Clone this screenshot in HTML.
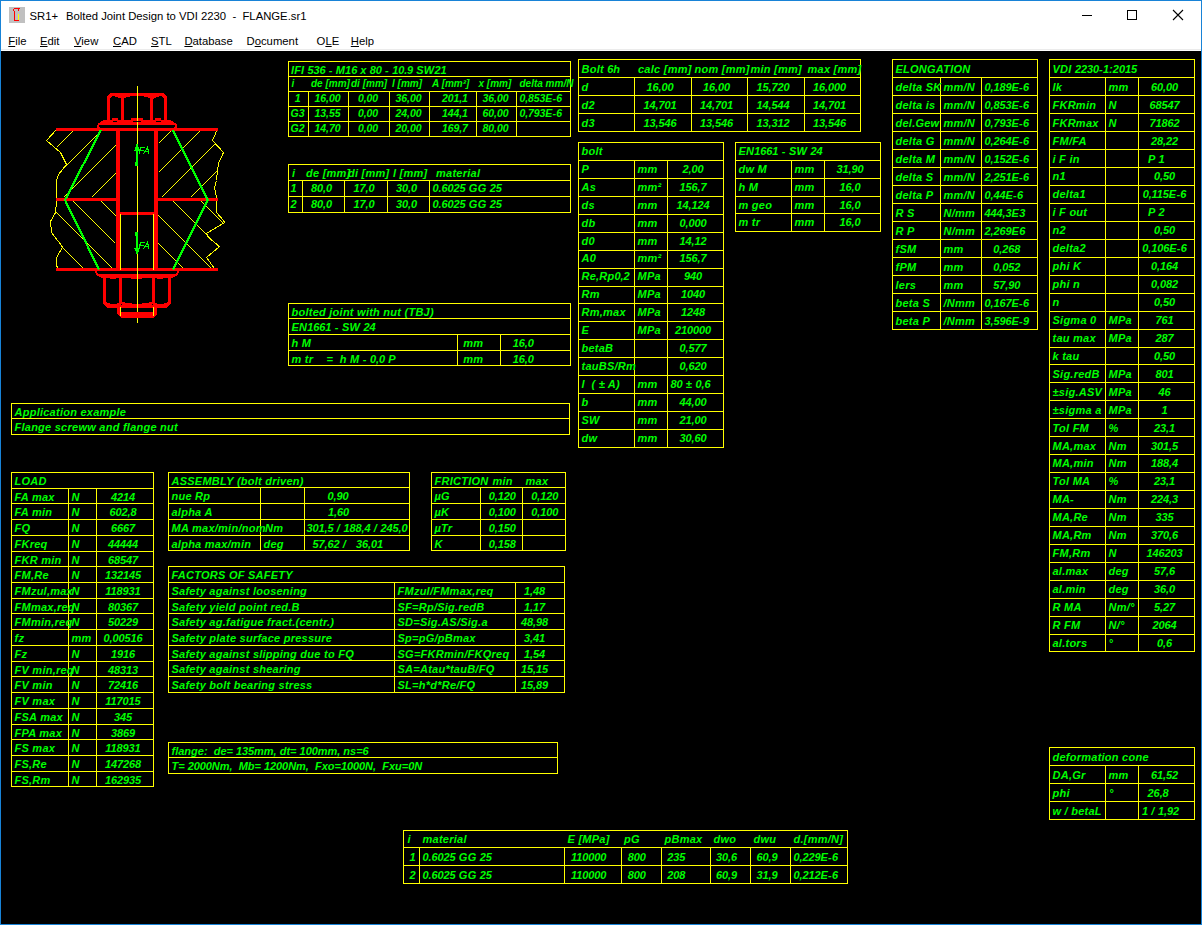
<!DOCTYPE html>
<html><head><meta charset="utf-8"><style>
html,body{margin:0;padding:0;width:1202px;height:925px;overflow:hidden;background:#fff}
#win{position:absolute;left:0;top:0;width:1200px;height:923px;border:1px solid #1883d7;background:#fff}
.t{position:absolute;font-family:"Liberation Sans",sans-serif;font-size:11.3px;line-height:13px;color:#000;white-space:pre}
.mi{position:absolute;top:35px;font-family:"Liberation Sans",sans-serif;font-size:11.3px;line-height:13px;color:#000;white-space:pre}
.mi u{text-decoration:underline;text-underline-offset:1px}
#canvas{position:absolute;left:1px;top:51px;width:1200px;height:873px;background:#000}
svg{position:absolute;left:0;top:0}
text{font-family:"Liberation Sans",sans-serif;font-weight:bold;font-style:italic;font-size:11px;fill:#00ff00;letter-spacing:0.25px;white-space:pre}
tspan.d{letter-spacing:-0.1px}
</style></head><body>
<div id="win"></div>
<div style="position:absolute;left:9px;top:7px;width:16px;height:16px;background:#c0c0c0"></div>
<svg width="30" height="30" style="position:absolute;left:0;top:0" shape-rendering="crispEdges"><g fill="#f00"><rect x="14" y="8" width="6" height="1"/><rect x="13" y="9" width="1" height="2"/><rect x="18" y="9" width="1" height="2"/><rect x="14" y="11" width="1" height="10"/><rect x="14" y="20" width="5" height="1"/></g><rect x="18" y="14" width="1" height="6" fill="#ff0"/></svg>
<div class="t" style="left:29.5px;top:10px">SR1+</div><div class="t" style="left:66px;top:10px">Bolted Joint Design to VDI 2230  -  FLANGE.sr1</div>
<svg width="1202" height="51" style="position:absolute;left:0;top:0" shape-rendering="crispEdges">
<rect x="1082" y="15" width="10" height="1" fill="#000"/>
<rect x="1127.5" y="10.5" width="9" height="9" fill="none" stroke="#000" stroke-width="1"/>
</svg>
<svg width="1202" height="51" style="position:absolute;left:0;top:0"><path d="M1173,10 L1183,20 M1183,10 L1173,20" stroke="#000" stroke-width="1.1"/></svg>
<span class="mi" style="left:8.3px"><u>F</u>ile</span><span class="mi" style="left:40px"><u>E</u>dit</span><span class="mi" style="left:74px"><u>V</u>iew</span><span class="mi" style="left:113px"><u>C</u>AD</span><span class="mi" style="left:151px"><u>S</u>TL</span><span class="mi" style="left:184.4px"><u>D</u>atabase</span><span class="mi" style="left:246.5px">D<u>o</u>cument</span><span class="mi" style="left:316.6px">O<u>L</u>E</span><span class="mi" style="left:350.8px"><u>H</u>elp</span>
<div style="position:absolute;left:1px;top:49px;width:1200px;height:1px;background:#ebebeb"></div>
<div id="canvas"></div>
<svg width="1202" height="925" style="position:absolute;left:0;top:0">
<g fill="#ffff00" shape-rendering="crispEdges"><rect x="288" y="61" width="283" height="1"/><rect x="288" y="136" width="283" height="1"/><rect x="288" y="61" width="1" height="76"/><rect x="570" y="61" width="1" height="76"/><rect x="288" y="76" width="283" height="1"/><rect x="288" y="91" width="283" height="1"/><rect x="288" y="106" width="283" height="1"/><rect x="288" y="121" width="283" height="1"/><rect x="308" y="91" width="1" height="46"/><rect x="348" y="91" width="1" height="46"/><rect x="389" y="91" width="1" height="46"/><rect x="429" y="91" width="1" height="46"/><rect x="476" y="91" width="1" height="46"/><rect x="516" y="91" width="1" height="46"/><rect x="578" y="59" width="283" height="1"/><rect x="578" y="131" width="283" height="1"/><rect x="578" y="59" width="1" height="73"/><rect x="860" y="59" width="1" height="73"/><rect x="578" y="77" width="283" height="1"/><rect x="578" y="95" width="283" height="1"/><rect x="578" y="113" width="283" height="1"/><rect x="634" y="77" width="1" height="55"/><rect x="691" y="77" width="1" height="55"/><rect x="747" y="77" width="1" height="55"/><rect x="804" y="77" width="1" height="55"/><rect x="892" y="59" width="146" height="1"/><rect x="892" y="329" width="146" height="1"/><rect x="892" y="59" width="1" height="271"/><rect x="1037" y="59" width="1" height="271"/><rect x="892" y="77" width="146" height="1"/><rect x="892" y="95" width="146" height="1"/><rect x="892" y="113" width="146" height="1"/><rect x="892" y="131" width="146" height="1"/><rect x="892" y="149" width="146" height="1"/><rect x="892" y="167" width="146" height="1"/><rect x="892" y="185" width="146" height="1"/><rect x="892" y="203" width="146" height="1"/><rect x="892" y="221" width="146" height="1"/><rect x="892" y="239" width="146" height="1"/><rect x="892" y="257" width="146" height="1"/><rect x="892" y="275" width="146" height="1"/><rect x="892" y="293" width="146" height="1"/><rect x="892" y="311" width="146" height="1"/><rect x="940" y="77" width="1" height="253"/><rect x="981" y="77" width="1" height="253"/><rect x="1049" y="59" width="146" height="1"/><rect x="1049" y="651" width="146" height="1"/><rect x="1049" y="59" width="1" height="593"/><rect x="1194" y="59" width="1" height="593"/><rect x="1049" y="77" width="146" height="1"/><rect x="1049" y="95" width="146" height="1"/><rect x="1049" y="113" width="146" height="1"/><rect x="1049" y="131" width="146" height="1"/><rect x="1049" y="149" width="146" height="1"/><rect x="1049" y="167" width="146" height="1"/><rect x="1049" y="185" width="146" height="1"/><rect x="1049" y="203" width="146" height="1"/><rect x="1049" y="221" width="146" height="1"/><rect x="1049" y="239" width="146" height="1"/><rect x="1049" y="257" width="146" height="1"/><rect x="1049" y="275" width="146" height="1"/><rect x="1049" y="293" width="146" height="1"/><rect x="1049" y="311" width="146" height="1"/><rect x="1049" y="329" width="146" height="1"/><rect x="1049" y="347" width="146" height="1"/><rect x="1049" y="364" width="146" height="1"/><rect x="1049" y="382" width="146" height="1"/><rect x="1049" y="400" width="146" height="1"/><rect x="1049" y="418" width="146" height="1"/><rect x="1049" y="436" width="146" height="1"/><rect x="1049" y="454" width="146" height="1"/><rect x="1049" y="472" width="146" height="1"/><rect x="1049" y="490" width="146" height="1"/><rect x="1049" y="508" width="146" height="1"/><rect x="1049" y="526" width="146" height="1"/><rect x="1049" y="544" width="146" height="1"/><rect x="1049" y="562" width="146" height="1"/><rect x="1049" y="580" width="146" height="1"/><rect x="1049" y="598" width="146" height="1"/><rect x="1049" y="616" width="146" height="1"/><rect x="1049" y="634" width="146" height="1"/><rect x="1105" y="77" width="1" height="575"/><rect x="1138" y="77" width="1" height="575"/><rect x="288" y="164" width="283" height="1"/><rect x="288" y="212" width="283" height="1"/><rect x="288" y="164" width="1" height="49"/><rect x="570" y="164" width="1" height="49"/><rect x="288" y="180" width="283" height="1"/><rect x="288" y="196" width="283" height="1"/><rect x="302" y="180" width="1" height="33"/><rect x="344" y="180" width="1" height="33"/><rect x="387" y="180" width="1" height="33"/><rect x="429" y="180" width="1" height="33"/><rect x="578" y="142" width="146" height="1"/><rect x="578" y="447" width="146" height="1"/><rect x="578" y="142" width="1" height="306"/><rect x="723" y="142" width="1" height="306"/><rect x="578" y="160" width="146" height="1"/><rect x="578" y="178" width="146" height="1"/><rect x="578" y="196" width="146" height="1"/><rect x="578" y="214" width="146" height="1"/><rect x="578" y="232" width="146" height="1"/><rect x="578" y="250" width="146" height="1"/><rect x="578" y="268" width="146" height="1"/><rect x="578" y="286" width="146" height="1"/><rect x="578" y="303" width="146" height="1"/><rect x="578" y="321" width="146" height="1"/><rect x="578" y="339" width="146" height="1"/><rect x="578" y="357" width="146" height="1"/><rect x="578" y="375" width="146" height="1"/><rect x="578" y="393" width="146" height="1"/><rect x="578" y="411" width="146" height="1"/><rect x="578" y="429" width="146" height="1"/><rect x="634" y="160" width="1" height="288"/><rect x="667" y="160" width="1" height="288"/><rect x="735" y="142" width="146" height="1"/><rect x="735" y="231" width="146" height="1"/><rect x="735" y="142" width="1" height="90"/><rect x="880" y="142" width="1" height="90"/><rect x="735" y="160" width="146" height="1"/><rect x="735" y="178" width="146" height="1"/><rect x="735" y="196" width="146" height="1"/><rect x="735" y="213" width="146" height="1"/><rect x="791" y="160" width="1" height="72"/><rect x="824" y="160" width="1" height="72"/><rect x="288" y="303" width="283" height="1"/><rect x="288" y="365" width="283" height="1"/><rect x="288" y="303" width="1" height="63"/><rect x="570" y="303" width="1" height="63"/><rect x="288" y="318" width="283" height="1"/><rect x="288" y="334" width="283" height="1"/><rect x="288" y="350" width="283" height="1"/><rect x="457" y="334" width="1" height="32"/><rect x="500" y="334" width="1" height="32"/><rect x="11" y="403" width="559" height="1"/><rect x="11" y="434" width="559" height="1"/><rect x="11" y="403" width="1" height="32"/><rect x="569" y="403" width="1" height="32"/><rect x="11" y="418" width="559" height="1"/><rect x="11" y="472" width="143" height="1"/><rect x="11" y="786" width="143" height="1"/><rect x="11" y="472" width="1" height="315"/><rect x="153" y="472" width="1" height="315"/><rect x="11" y="488" width="143" height="1"/><rect x="11" y="503" width="143" height="1"/><rect x="11" y="519" width="143" height="1"/><rect x="11" y="535" width="143" height="1"/><rect x="11" y="551" width="143" height="1"/><rect x="11" y="566" width="143" height="1"/><rect x="11" y="582" width="143" height="1"/><rect x="11" y="598" width="143" height="1"/><rect x="11" y="613" width="143" height="1"/><rect x="11" y="629" width="143" height="1"/><rect x="11" y="645" width="143" height="1"/><rect x="11" y="661" width="143" height="1"/><rect x="11" y="676" width="143" height="1"/><rect x="11" y="692" width="143" height="1"/><rect x="11" y="708" width="143" height="1"/><rect x="11" y="724" width="143" height="1"/><rect x="11" y="739" width="143" height="1"/><rect x="11" y="755" width="143" height="1"/><rect x="11" y="771" width="143" height="1"/><rect x="68" y="488" width="1" height="299"/><rect x="96" y="488" width="1" height="299"/><rect x="168" y="472" width="242" height="1"/><rect x="168" y="550" width="242" height="1"/><rect x="168" y="472" width="1" height="79"/><rect x="409" y="472" width="1" height="79"/><rect x="168" y="487" width="242" height="1"/><rect x="168" y="503" width="242" height="1"/><rect x="168" y="519" width="242" height="1"/><rect x="168" y="535" width="242" height="1"/><rect x="260" y="487" width="1" height="64"/><rect x="304" y="487" width="1" height="64"/><rect x="431" y="472" width="135" height="1"/><rect x="431" y="550" width="135" height="1"/><rect x="431" y="472" width="1" height="79"/><rect x="565" y="472" width="1" height="79"/><rect x="431" y="487" width="135" height="1"/><rect x="431" y="503" width="135" height="1"/><rect x="431" y="519" width="135" height="1"/><rect x="431" y="535" width="135" height="1"/><rect x="480" y="487" width="1" height="64"/><rect x="522" y="487" width="1" height="64"/><rect x="168" y="566" width="397" height="1"/><rect x="168" y="692" width="397" height="1"/><rect x="168" y="566" width="1" height="127"/><rect x="564" y="566" width="1" height="127"/><rect x="168" y="582" width="397" height="1"/><rect x="168" y="598" width="397" height="1"/><rect x="168" y="613" width="397" height="1"/><rect x="168" y="629" width="397" height="1"/><rect x="168" y="645" width="397" height="1"/><rect x="168" y="660" width="397" height="1"/><rect x="168" y="676" width="397" height="1"/><rect x="394" y="582" width="1" height="111"/><rect x="515" y="582" width="1" height="111"/><rect x="168" y="742" width="390" height="1"/><rect x="168" y="773" width="390" height="1"/><rect x="168" y="742" width="1" height="32"/><rect x="557" y="742" width="1" height="32"/><rect x="168" y="757" width="390" height="1"/><rect x="1049" y="747" width="146" height="1"/><rect x="1049" y="819" width="146" height="1"/><rect x="1049" y="747" width="1" height="73"/><rect x="1194" y="747" width="1" height="73"/><rect x="1049" y="765" width="146" height="1"/><rect x="1049" y="783" width="146" height="1"/><rect x="1049" y="801" width="146" height="1"/><rect x="1105" y="765" width="1" height="55"/><rect x="1138" y="765" width="1" height="55"/><rect x="403" y="830" width="445" height="1"/><rect x="403" y="883" width="445" height="1"/><rect x="403" y="830" width="1" height="54"/><rect x="847" y="830" width="1" height="54"/><rect x="403" y="847" width="445" height="1"/><rect x="403" y="865" width="445" height="1"/><rect x="419" y="847" width="1" height="37"/><rect x="564" y="847" width="1" height="37"/><rect x="621" y="847" width="1" height="37"/><rect x="661" y="847" width="1" height="37"/><rect x="710" y="847" width="1" height="37"/><rect x="750" y="847" width="1" height="37"/><rect x="790" y="847" width="1" height="37"/></g>
<g shape-rendering="crispEdges"><g stroke="#ffff00" stroke-width="1" fill="none">
<polyline points="56.5,129.5 46.5,140.5 53.5,146.5 60.5,152.5 66.5,164.5 58.5,174.5 56.5,180.5 56.5,195.5 57.5,199.5 56.5,202.5 55.5,212.5 50.5,221.5 51.5,232.5 54.5,236.5 61.5,245.5 62.5,247.5 56.5,257.5 56.5,264.5 57.5,268.5"/>
<polyline points="216.5,130.5 215.5,133.5 212.5,140.5 223.5,152.5 218.5,163.5 217.5,170.5 216.5,180.5 214.5,187.5 216.5,197.5 216.5,206.5 216.5,212.5 223.5,220.5 224.5,222.5 206.5,233.5 208.5,237.5 219.5,246.5 206.5,257.5 214.5,268.5"/>
<line x1="56.5" y1="147.5" x2="73.5" y2="130.5"/>
<line x1="61.5" y1="170.5" x2="100.5" y2="131.5"/>
<line x1="63.5" y1="197.5" x2="115.5" y2="145.5"/>
<line x1="91.5" y1="197.5" x2="115.5" y2="173.5"/>
<line x1="158.5" y1="143.5" x2="171.5" y2="130.5"/>
<line x1="158.5" y1="172.5" x2="200.5" y2="130.5"/>
<line x1="161.5" y1="197.5" x2="214.5" y2="144.5"/>
<line x1="190.5" y1="197.5" x2="216.5" y2="171.5"/>
<line x1="100.5" y1="200.5" x2="116.5" y2="216.5"/>
<line x1="72.5" y1="200.5" x2="115.5" y2="243.5"/>
<line x1="56.5" y1="212.5" x2="112.5" y2="268.5"/>
<line x1="62.5" y1="247.5" x2="83.5" y2="268.5"/>
<line x1="201.5" y1="201.5" x2="223.5" y2="223.5"/>
<line x1="173.5" y1="201.5" x2="219.5" y2="247.5"/>
<line x1="158.5" y1="215.5" x2="211.5" y2="268.5"/>
<line x1="158.5" y1="243.5" x2="183.5" y2="268.5"/>
</g>
<g stroke="#ff0000" fill="none" stroke-linejoin="round">
<path stroke-width="3" d="M108.5,120 V97.5 L111.5,94.5 H162.5 L165.5,97.5 V120"/>
<path stroke-width="3" d="M122.5,97.5 V119.5 M151.5,97.5 V119.5"/>
<path stroke-width="3" d="M56,129.5 H218 M56,199.5 H118 M156,199.5 H218 M56,269.5 H218"/>
<path stroke-width="4" d="M118,131 V268 M156,131 V268"/>
<path stroke-width="3" d="M120,213.5 H154"/>
<path stroke-width="2" d="M97.8,124.5 Q97.8,128 100.5,129 M176.2,124.5 Q176.2,128 173.5,129"/>
<path stroke-width="2" d="M95.8,270.5 Q96.5,275.5 102,277 M178.2,270.5 Q177.5,275.5 172,277"/>
<path stroke-width="3" d="M104.5,278 V303 M169.5,278 V303 M120.5,278 V302 M153.5,278 V302"/>
</g>
<g fill="#ff0000">
<polygon points="103.5,120 170.5,120 176.5,124 176.5,125 97.5,125 97.5,124"/>
<polygon points="113,96 123,96 123,99.5 118,97.5"/><polygon points="161,96 151,96 151,99.5 156,97.5"/>
<polygon points="122,96 132,96 127,97.2 122,99.5"/><polygon points="152,96 142,96 147,97.2 152,99.5"/>
<rect x="112" y="118" width="6" height="2"/><rect x="131" y="118" width="12" height="2"/><rect x="155" y="118" width="6" height="2"/>
<polygon points="99,273.5 175,273.5 173,278 101,278"/>
<rect x="110" y="277" width="6" height="2"/><rect x="131" y="277" width="11" height="2"/><rect x="156.5" y="277" width="6" height="2"/>
<polygon points="103,302 106,302 111,304 117,303.5 121,301.5 127,303 137,304 147,303 153,301.5 157,303.5 163,304 168,302 171,302 171,304 166,308 108,308 103,304"/>
<polygon points="117,307 121,307 121,312 153,312 153,307 157,307 157,314 153.5,317.5 120.5,317.5 117,314"/>
</g>
<g stroke="#ffff00" stroke-width="1" fill="none"><line x1="137.5" y1="86" x2="137.5" y2="323"/><line x1="120.5" y1="214" x2="120.5" y2="270"/><line x1="153.5" y1="214" x2="153.5" y2="270"/><line x1="120.5" y1="306.5" x2="120.5" y2="316"/><line x1="153.5" y1="306.5" x2="153.5" y2="316"/></g>
<g fill="#ff0000"><rect x="121" y="312" width="32" height="6"/></g><g fill="#000"><rect x="121" y="304" width="1" height="1"/><rect x="151.5" y="304" width="1.5" height="1"/></g>
<g fill="#000"><ellipse cx="115" cy="121.3" rx="2.5" ry="0.7"/><ellipse cx="137" cy="121.3" rx="4.5" ry="0.7"/><ellipse cx="158.5" cy="121.3" rx="2.5" ry="0.7"/></g>
<g stroke="#00ff00" stroke-width="2.2" fill="none"><polyline points="101,130 65,200 99,269.5"/><polyline points="172.7,130 207.8,200 173.2,269.5"/></g>
<g fill="#00ff00"><polygon points="137,143 140,151 138,151 138,166 135,166 135,162 136,162 136,151 134,151"/>
<polygon points="137,255.5 140,247.5 138,247.5 138,232 135,232 135,236 136,236 136,247.5 134,247.5"/></g>
<g stroke="#00ff00" stroke-width="1.1" fill="none"><path d="M140.5,147.5 L139,154 M140.5,147.5 H144.5 M140,150.5 H143.5 M143.5,154 L147.5,147.5 L149,154 M145,151.5 H148.5"/><path transform="translate(0,95)" d="M140.5,147.5 L139,154 M140.5,147.5 H144.5 M140,150.5 H143.5 M143.5,154 L147.5,147.5 L149,154 M145,151.5 H148.5"/></g></g>
<g><text x="291" y="73.5" style="font-size:11px;letter-spacing:0.15px">IFI <tspan class="d">536</tspan> - M<tspan class="d">16</tspan> x <tspan class="d">80</tspan> - <tspan class="d">10.9</tspan> SW<tspan class="d">21</tspan></text>
<text x="291.5" y="86.8" style="font-size:10px;letter-spacing:0px">i</text>
<text x="311" y="86.8" style="font-size:10px;letter-spacing:0px">de [mm]</text>
<text x="351" y="86.8" style="font-size:10px;letter-spacing:0px">di [mm]</text>
<text x="392" y="86.8" style="font-size:10px;letter-spacing:0px">l [mm]</text>
<text x="432" y="86.8" style="font-size:10px;letter-spacing:0px">A [mm²]</text>
<text x="478.5" y="86.8" style="font-size:10px;letter-spacing:0px">x [mm]</text>
<text x="519.5" y="86.8" style="font-size:10px;letter-spacing:0px">delta mm/N</text>
<text x="297.5" y="102.2" text-anchor="middle" style="font-size:10.5px;letter-spacing:0.238636px"><tspan class="d">1</tspan></text>
<text x="327.5" y="102.2" text-anchor="middle" style="font-size:10.5px;letter-spacing:0.238636px"><tspan class="d">16,00</tspan></text>
<text x="368" y="102.2" text-anchor="middle" style="font-size:10.5px;letter-spacing:0.238636px"><tspan class="d">0,00</tspan></text>
<text x="408.5" y="102.2" text-anchor="middle" style="font-size:10.5px;letter-spacing:0.238636px"><tspan class="d">36,00</tspan></text>
<text x="442" y="102.2" style="font-size:10.5px;letter-spacing:0.238636px"><tspan class="d">201,1</tspan></text>
<text x="495.5" y="102.2" text-anchor="middle" style="font-size:10.5px;letter-spacing:0.238636px"><tspan class="d">36,00</tspan></text>
<text x="519.5" y="102.2" style="font-size:10.5px;letter-spacing:0.238636px"><tspan class="d">0,853</tspan>E-<tspan class="d">6</tspan></text>
<text x="297.5" y="117.2" text-anchor="middle" style="font-size:10.5px;letter-spacing:0.238636px">G<tspan class="d">3</tspan></text>
<text x="327.5" y="117.2" text-anchor="middle" style="font-size:10.5px;letter-spacing:0.238636px"><tspan class="d">13,55</tspan></text>
<text x="368" y="117.2" text-anchor="middle" style="font-size:10.5px;letter-spacing:0.238636px"><tspan class="d">0,00</tspan></text>
<text x="408.5" y="117.2" text-anchor="middle" style="font-size:10.5px;letter-spacing:0.238636px"><tspan class="d">24,00</tspan></text>
<text x="442" y="117.2" style="font-size:10.5px;letter-spacing:0.238636px"><tspan class="d">144,1</tspan></text>
<text x="495.5" y="117.2" text-anchor="middle" style="font-size:10.5px;letter-spacing:0.238636px"><tspan class="d">60,00</tspan></text>
<text x="519.5" y="117.2" style="font-size:10.5px;letter-spacing:0.238636px"><tspan class="d">0,793</tspan>E-<tspan class="d">6</tspan></text>
<text x="297.5" y="132.2" text-anchor="middle" style="font-size:10.5px;letter-spacing:0.238636px">G<tspan class="d">2</tspan></text>
<text x="327.5" y="132.2" text-anchor="middle" style="font-size:10.5px;letter-spacing:0.238636px"><tspan class="d">14,70</tspan></text>
<text x="368" y="132.2" text-anchor="middle" style="font-size:10.5px;letter-spacing:0.238636px"><tspan class="d">0,00</tspan></text>
<text x="408.5" y="132.2" text-anchor="middle" style="font-size:10.5px;letter-spacing:0.238636px"><tspan class="d">20,00</tspan></text>
<text x="442" y="132.2" style="font-size:10.5px;letter-spacing:0.238636px"><tspan class="d">169,7</tspan></text>
<text x="495.5" y="132.2" text-anchor="middle" style="font-size:10.5px;letter-spacing:0.238636px"><tspan class="d">80,00</tspan></text>
<text x="581.5" y="72.8">Bolt <tspan class="d">6</tspan>h</text>
<text x="638" y="72.8">calc [mm]</text>
<text x="694.5" y="72.8">nom [mm]</text>
<text x="750.5" y="72.8">min [mm]</text>
<text x="807.5" y="72.8">max [mm]</text>
<text x="581.5" y="90.8">d</text>
<text x="660" y="90.8" text-anchor="middle"><tspan class="d">16,00</tspan></text>
<text x="716.5" y="90.8" text-anchor="middle"><tspan class="d">16,00</tspan></text>
<text x="773" y="90.8" text-anchor="middle"><tspan class="d">15,720</tspan></text>
<text x="829.5" y="90.8" text-anchor="middle"><tspan class="d">16,000</tspan></text>
<text x="581.5" y="108.8">d<tspan class="d">2</tspan></text>
<text x="660" y="108.8" text-anchor="middle"><tspan class="d">14,701</tspan></text>
<text x="716.5" y="108.8" text-anchor="middle"><tspan class="d">14,701</tspan></text>
<text x="773" y="108.8" text-anchor="middle"><tspan class="d">14,544</tspan></text>
<text x="829.5" y="108.8" text-anchor="middle"><tspan class="d">14,701</tspan></text>
<text x="581.5" y="126.8">d<tspan class="d">3</tspan></text>
<text x="660" y="126.8" text-anchor="middle"><tspan class="d">13,546</tspan></text>
<text x="716.5" y="126.8" text-anchor="middle"><tspan class="d">13,546</tspan></text>
<text x="773" y="126.8" text-anchor="middle"><tspan class="d">13,312</tspan></text>
<text x="829.5" y="126.8" text-anchor="middle"><tspan class="d">13,546</tspan></text>
<text x="895.5" y="73">ELONGATION</text>
<text x="895.5" y="91">delta SK</text>
<text x="943.5" y="91">mm/N</text>
<text x="984.5" y="91"><tspan class="d">0,189</tspan>E-<tspan class="d">6</tspan></text>
<text x="895.5" y="109">delta is</text>
<text x="943.5" y="109">mm/N</text>
<text x="984.5" y="109"><tspan class="d">0,853</tspan>E-<tspan class="d">6</tspan></text>
<text x="895.5" y="127">del.Gew</text>
<text x="943.5" y="127">mm/N</text>
<text x="984.5" y="127"><tspan class="d">0,793</tspan>E-<tspan class="d">6</tspan></text>
<text x="895.5" y="145">delta G</text>
<text x="943.5" y="145">mm/N</text>
<text x="984.5" y="145"><tspan class="d">0,264</tspan>E-<tspan class="d">6</tspan></text>
<text x="895.5" y="163">delta M</text>
<text x="943.5" y="163">mm/N</text>
<text x="984.5" y="163"><tspan class="d">0,152</tspan>E-<tspan class="d">6</tspan></text>
<text x="895.5" y="181">delta S</text>
<text x="943.5" y="181">mm/N</text>
<text x="984.5" y="181"><tspan class="d">2,251</tspan>E-<tspan class="d">6</tspan></text>
<text x="895.5" y="199">delta P</text>
<text x="943.5" y="199">mm/N</text>
<text x="984.5" y="199"><tspan class="d">0,44</tspan>E-<tspan class="d">6</tspan></text>
<text x="895.5" y="217">R S</text>
<text x="943.5" y="217">N/mm</text>
<text x="984.5" y="217"><tspan class="d">444,3</tspan>E<tspan class="d">3</tspan></text>
<text x="895.5" y="235">R P</text>
<text x="943.5" y="235">N/mm</text>
<text x="984.5" y="235"><tspan class="d">2,269</tspan>E<tspan class="d">6</tspan></text>
<text x="895.5" y="253">fSM</text>
<text x="943.5" y="253">mm</text>
<text x="993.3" y="253"><tspan class="d">0,268</tspan></text>
<text x="895.5" y="271">fPM</text>
<text x="943.5" y="271">mm</text>
<text x="993.3" y="271"><tspan class="d">0,052</tspan></text>
<text x="895.5" y="289">lers</text>
<text x="943.5" y="289">mm</text>
<text x="993.3" y="289"><tspan class="d">57,90</tspan></text>
<text x="895.5" y="307">beta S</text>
<text x="943.5" y="307">/Nmm</text>
<text x="984.5" y="307"><tspan class="d">0,167</tspan>E-<tspan class="d">6</tspan></text>
<text x="895.5" y="325">beta P</text>
<text x="943.5" y="325">/Nmm</text>
<text x="984.5" y="325"><tspan class="d">3,596</tspan>E-<tspan class="d">9</tspan></text>
<text x="1052.5" y="72.8">VDI <tspan class="d">2230</tspan>-<tspan class="d">1</tspan>:<tspan class="d">2015</tspan></text>
<text x="1052.5" y="90.74">lk</text>
<text x="1108.5" y="90.74">mm</text>
<text x="1164.5" y="90.74" text-anchor="middle"><tspan class="d">60,00</tspan></text>
<text x="1052.5" y="108.68">FKRmin</text>
<text x="1108.5" y="108.68">N</text>
<text x="1164.5" y="108.68" text-anchor="middle"><tspan class="d">68547</tspan></text>
<text x="1052.5" y="126.62">FKRmax</text>
<text x="1108.5" y="126.62">N</text>
<text x="1164.5" y="126.62" text-anchor="middle"><tspan class="d">71862</tspan></text>
<text x="1052.5" y="144.56">FM/FA</text>
<text x="1164.5" y="144.56" text-anchor="middle"><tspan class="d">28,22</tspan></text>
<text x="1052.5" y="162.5">i F in</text>
<text x="1148" y="162.5">P <tspan class="d">1</tspan></text>
<text x="1052.5" y="180.44">n<tspan class="d">1</tspan></text>
<text x="1164.5" y="180.44" text-anchor="middle"><tspan class="d">0,50</tspan></text>
<text x="1052.5" y="198.38">delta<tspan class="d">1</tspan></text>
<text x="1164.5" y="198.38" text-anchor="middle"><tspan class="d">0,115</tspan>E-<tspan class="d">6</tspan></text>
<text x="1052.5" y="216.32">i F out</text>
<text x="1148" y="216.32">P <tspan class="d">2</tspan></text>
<text x="1052.5" y="234.26">n<tspan class="d">2</tspan></text>
<text x="1164.5" y="234.26" text-anchor="middle"><tspan class="d">0,50</tspan></text>
<text x="1052.5" y="252.2">delta<tspan class="d">2</tspan></text>
<text x="1164.5" y="252.2" text-anchor="middle"><tspan class="d">0,106</tspan>E-<tspan class="d">6</tspan></text>
<text x="1052.5" y="270.14">phi K</text>
<text x="1164.5" y="270.14" text-anchor="middle"><tspan class="d">0,164</tspan></text>
<text x="1052.5" y="288.08">phi n</text>
<text x="1164.5" y="288.08" text-anchor="middle"><tspan class="d">0,082</tspan></text>
<text x="1052.5" y="306.02">n</text>
<text x="1164.5" y="306.02" text-anchor="middle"><tspan class="d">0,50</tspan></text>
<text x="1052.5" y="323.96">Sigma <tspan class="d">0</tspan></text>
<text x="1108.5" y="323.96">MPa</text>
<text x="1164.5" y="323.96" text-anchor="middle"><tspan class="d">761</tspan></text>
<text x="1052.5" y="341.9">tau max</text>
<text x="1108.5" y="341.9">MPa</text>
<text x="1164.5" y="341.9" text-anchor="middle"><tspan class="d">287</tspan></text>
<text x="1052.5" y="359.84">k tau</text>
<text x="1164.5" y="359.84" text-anchor="middle"><tspan class="d">0,50</tspan></text>
<text x="1052.5" y="377.78">Sig.redB</text>
<text x="1108.5" y="377.78">MPa</text>
<text x="1164.5" y="377.78" text-anchor="middle"><tspan class="d">801</tspan></text>
<text x="1052.5" y="395.72">±sig.ASV</text>
<text x="1108.5" y="395.72">MPa</text>
<text x="1164.5" y="395.72" text-anchor="middle"><tspan class="d">46</tspan></text>
<text x="1052.5" y="413.66">±sigma a</text>
<text x="1108.5" y="413.66">MPa</text>
<text x="1164.5" y="413.66" text-anchor="middle"><tspan class="d">1</tspan></text>
<text x="1052.5" y="431.6">Tol FM</text>
<text x="1108.5" y="431.6">%</text>
<text x="1164.5" y="431.6" text-anchor="middle"><tspan class="d">23,1</tspan></text>
<text x="1052.5" y="449.54">MA,max</text>
<text x="1108.5" y="449.54">Nm</text>
<text x="1164.5" y="449.54" text-anchor="middle"><tspan class="d">301,5</tspan></text>
<text x="1052.5" y="467.48">MA,min</text>
<text x="1108.5" y="467.48">Nm</text>
<text x="1164.5" y="467.48" text-anchor="middle"><tspan class="d">188,4</tspan></text>
<text x="1052.5" y="485.42">Tol MA</text>
<text x="1108.5" y="485.42">%</text>
<text x="1164.5" y="485.42" text-anchor="middle"><tspan class="d">23,1</tspan></text>
<text x="1052.5" y="503.36">MA-</text>
<text x="1108.5" y="503.36">Nm</text>
<text x="1164.5" y="503.36" text-anchor="middle"><tspan class="d">224,3</tspan></text>
<text x="1052.5" y="521.3">MA,Re</text>
<text x="1108.5" y="521.3">Nm</text>
<text x="1164.5" y="521.3" text-anchor="middle"><tspan class="d">335</tspan></text>
<text x="1052.5" y="539.24">MA,Rm</text>
<text x="1108.5" y="539.24">Nm</text>
<text x="1164.5" y="539.24" text-anchor="middle"><tspan class="d">370,6</tspan></text>
<text x="1052.5" y="557.18">FM,Rm</text>
<text x="1108.5" y="557.18">N</text>
<text x="1164.5" y="557.18" text-anchor="middle"><tspan class="d">146203</tspan></text>
<text x="1052.5" y="575.12">al.max</text>
<text x="1108.5" y="575.12">deg</text>
<text x="1164.5" y="575.12" text-anchor="middle"><tspan class="d">57,6</tspan></text>
<text x="1052.5" y="593.06">al.min</text>
<text x="1108.5" y="593.06">deg</text>
<text x="1164.5" y="593.06" text-anchor="middle"><tspan class="d">36,0</tspan></text>
<text x="1052.5" y="611">R MA</text>
<text x="1108.5" y="611">Nm/°</text>
<text x="1164.5" y="611" text-anchor="middle"><tspan class="d">5,27</tspan></text>
<text x="1052.5" y="628.94">R FM</text>
<text x="1108.5" y="628.94">N/°</text>
<text x="1164.5" y="628.94" text-anchor="middle"><tspan class="d">2064</tspan></text>
<text x="1052.5" y="646.88">al.tors</text>
<text x="1108.5" y="646.88">°</text>
<text x="1164.5" y="646.88" text-anchor="middle"><tspan class="d">0,6</tspan></text>
<text x="292" y="176.7">i</text>
<text x="306" y="176.7">de [mm]</text>
<text x="348" y="176.7">di [mm]</text>
<text x="393" y="176.7">l [mm]</text>
<text x="436" y="176.7">material</text>
<text x="293.5" y="192.2" text-anchor="middle"><tspan class="d">1</tspan></text>
<text x="321.5" y="192.2" text-anchor="middle"><tspan class="d">80,0</tspan></text>
<text x="364" y="192.2" text-anchor="middle"><tspan class="d">17,0</tspan></text>
<text x="406.5" y="192.2" text-anchor="middle"><tspan class="d">30,0</tspan></text>
<text x="432.5" y="192.2"><tspan class="d">0.6025</tspan> GG <tspan class="d">25</tspan></text>
<text x="293.5" y="208.2" text-anchor="middle"><tspan class="d">2</tspan></text>
<text x="321.5" y="208.2" text-anchor="middle"><tspan class="d">80,0</tspan></text>
<text x="364" y="208.2" text-anchor="middle"><tspan class="d">17,0</tspan></text>
<text x="406.5" y="208.2" text-anchor="middle"><tspan class="d">30,0</tspan></text>
<text x="432.5" y="208.2"><tspan class="d">0.6025</tspan> GG <tspan class="d">25</tspan></text>
<text x="581.5" y="154.8">bolt</text>
<text x="581.5" y="172.74">P</text>
<text x="637.5" y="172.74">mm</text>
<text x="693" y="172.74" text-anchor="middle"><tspan class="d">2,00</tspan></text>
<text x="581.5" y="190.68">As</text>
<text x="637.5" y="190.68">mm²</text>
<text x="693" y="190.68" text-anchor="middle"><tspan class="d">156,7</tspan></text>
<text x="581.5" y="208.62">ds</text>
<text x="637.5" y="208.62">mm</text>
<text x="693" y="208.62" text-anchor="middle"><tspan class="d">14,124</tspan></text>
<text x="581.5" y="226.56">db</text>
<text x="637.5" y="226.56">mm</text>
<text x="693" y="226.56" text-anchor="middle"><tspan class="d">0,000</tspan></text>
<text x="581.5" y="244.5">d<tspan class="d">0</tspan></text>
<text x="637.5" y="244.5">mm</text>
<text x="693" y="244.5" text-anchor="middle"><tspan class="d">14,12</tspan></text>
<text x="581.5" y="262.44">A<tspan class="d">0</tspan></text>
<text x="637.5" y="262.44">mm²</text>
<text x="693" y="262.44" text-anchor="middle"><tspan class="d">156,7</tspan></text>
<text x="581.5" y="280.38">Re,Rp<tspan class="d">0,2</tspan></text>
<text x="637.5" y="280.38">MPa</text>
<text x="693" y="280.38" text-anchor="middle"><tspan class="d">940</tspan></text>
<text x="581.5" y="298.32">Rm</text>
<text x="637.5" y="298.32">MPa</text>
<text x="693" y="298.32" text-anchor="middle"><tspan class="d">1040</tspan></text>
<text x="581.5" y="316.26">Rm,max</text>
<text x="637.5" y="316.26">MPa</text>
<text x="693" y="316.26" text-anchor="middle"><tspan class="d">1248</tspan></text>
<text x="581.5" y="334.2">E</text>
<text x="637.5" y="334.2">MPa</text>
<text x="693" y="334.2" text-anchor="middle"><tspan class="d">210000</tspan></text>
<text x="581.5" y="352.14">betaB</text>
<text x="693" y="352.14" text-anchor="middle"><tspan class="d">0,577</tspan></text>
<text x="581.5" y="370.08">tauBS/Rm</text>
<text x="693" y="370.08" text-anchor="middle"><tspan class="d">0,620</tspan></text>
<text x="581.5" y="388.02">l  ( ± A)</text>
<text x="637.5" y="388.02">mm</text>
<text x="670.5" y="388.02"><tspan class="d">80</tspan> ± <tspan class="d">0,6</tspan></text>
<text x="581.5" y="405.96">b</text>
<text x="637.5" y="405.96">mm</text>
<text x="693" y="405.96" text-anchor="middle"><tspan class="d">44,00</tspan></text>
<text x="581.5" y="423.9">SW</text>
<text x="637.5" y="423.9">mm</text>
<text x="693" y="423.9" text-anchor="middle"><tspan class="d">21,00</tspan></text>
<text x="581.5" y="441.84">dw</text>
<text x="637.5" y="441.84">mm</text>
<text x="693" y="441.84" text-anchor="middle"><tspan class="d">30,60</tspan></text>
<text x="738.5" y="154.7">EN<tspan class="d">1661</tspan> - SW <tspan class="d">24</tspan></text>
<text x="738.5" y="172.7">dw M</text>
<text x="794.5" y="172.7">mm</text>
<text x="850" y="172.7" text-anchor="middle"><tspan class="d">31,90</tspan></text>
<text x="738.5" y="190.7">h M</text>
<text x="794.5" y="190.7">mm</text>
<text x="850" y="190.7" text-anchor="middle"><tspan class="d">16,0</tspan></text>
<text x="738.5" y="208.7">m geo</text>
<text x="794.5" y="208.7">mm</text>
<text x="850" y="208.7" text-anchor="middle"><tspan class="d">16,0</tspan></text>
<text x="738.5" y="225.7">m tr</text>
<text x="794.5" y="225.7">mm</text>
<text x="850" y="225.7" text-anchor="middle"><tspan class="d">16,0</tspan></text>
<text x="291.5" y="316">bolted joint with nut (TBJ)</text>
<text x="291.5" y="331">EN<tspan class="d">1661</tspan> - SW <tspan class="d">24</tspan></text>
<text x="291.5" y="347">h M</text>
<text x="463.3" y="347">mm</text>
<text x="512.8" y="347"><tspan class="d">16,0</tspan></text>
<text x="291.5" y="363">m tr    =  h M - <tspan class="d">0,0</tspan> P</text>
<text x="463.3" y="363">mm</text>
<text x="512.8" y="363"><tspan class="d">16,0</tspan></text>
<text x="14.5" y="416">Application example</text>
<text x="14.5" y="431">Flange screww and flange nut</text>
<text x="14.5" y="484.9">LOAD</text>
<text x="14.5" y="500.9">FA max</text>
<text x="71.5" y="500.9">N</text>
<text x="123" y="500.9" text-anchor="middle"><tspan class="d">4214</tspan></text>
<text x="14.5" y="515.9">FA min</text>
<text x="71.5" y="515.9">N</text>
<text x="123" y="515.9" text-anchor="middle"><tspan class="d">602,8</tspan></text>
<text x="14.5" y="531.9">FQ</text>
<text x="71.5" y="531.9">N</text>
<text x="123" y="531.9" text-anchor="middle"><tspan class="d">6667</tspan></text>
<text x="14.5" y="547.9">FKreq</text>
<text x="71.5" y="547.9">N</text>
<text x="123" y="547.9" text-anchor="middle"><tspan class="d">44444</tspan></text>
<text x="14.5" y="563.9">FKR min</text>
<text x="71.5" y="563.9">N</text>
<text x="123" y="563.9" text-anchor="middle"><tspan class="d">68547</tspan></text>
<text x="14.5" y="578.9">FM,Re</text>
<text x="71.5" y="578.9">N</text>
<text x="123" y="578.9" text-anchor="middle"><tspan class="d">132145</tspan></text>
<text x="14.5" y="594.9">FMzul,max</text>
<text x="71.5" y="594.9">N</text>
<text x="123" y="594.9" text-anchor="middle"><tspan class="d">118931</tspan></text>
<text x="14.5" y="610.9">FMmax,req</text>
<text x="71.5" y="610.9">N</text>
<text x="123" y="610.9" text-anchor="middle"><tspan class="d">80367</tspan></text>
<text x="14.5" y="625.9">FMmin,req</text>
<text x="71.5" y="625.9">N</text>
<text x="123" y="625.9" text-anchor="middle"><tspan class="d">50229</tspan></text>
<text x="14.5" y="641.9">fz</text>
<text x="71.5" y="641.9">mm</text>
<text x="123" y="641.9" text-anchor="middle"><tspan class="d">0,00516</tspan></text>
<text x="14.5" y="657.9">Fz</text>
<text x="71.5" y="657.9">N</text>
<text x="123" y="657.9" text-anchor="middle"><tspan class="d">1916</tspan></text>
<text x="14.5" y="673.9">FV min,req</text>
<text x="71.5" y="673.9">N</text>
<text x="123" y="673.9" text-anchor="middle"><tspan class="d">48313</tspan></text>
<text x="14.5" y="688.9">FV min</text>
<text x="71.5" y="688.9">N</text>
<text x="123" y="688.9" text-anchor="middle"><tspan class="d">72416</tspan></text>
<text x="14.5" y="704.9">FV max</text>
<text x="71.5" y="704.9">N</text>
<text x="123" y="704.9" text-anchor="middle"><tspan class="d">117015</tspan></text>
<text x="14.5" y="720.9">FSA max</text>
<text x="71.5" y="720.9">N</text>
<text x="123" y="720.9" text-anchor="middle"><tspan class="d">345</tspan></text>
<text x="14.5" y="736.9">FPA max</text>
<text x="71.5" y="736.9">N</text>
<text x="123" y="736.9" text-anchor="middle"><tspan class="d">3869</tspan></text>
<text x="14.5" y="751.9">FS max</text>
<text x="71.5" y="751.9">N</text>
<text x="123" y="751.9" text-anchor="middle"><tspan class="d">118931</tspan></text>
<text x="14.5" y="767.9">FS,Re</text>
<text x="71.5" y="767.9">N</text>
<text x="123" y="767.9" text-anchor="middle"><tspan class="d">147268</tspan></text>
<text x="14.5" y="783.9">FS,Rm</text>
<text x="71.5" y="783.9">N</text>
<text x="123" y="783.9" text-anchor="middle"><tspan class="d">162935</tspan></text>
<text x="171.5" y="485">ASSEMBLY (bolt driven)</text>
<text x="171.5" y="500">nue Rp</text>
<text x="327.5" y="500"><tspan class="d">0,90</tspan></text>
<text x="171.5" y="516">alpha A</text>
<text x="328" y="516"><tspan class="d">1,60</tspan></text>
<text x="171.5" y="532">MA max/min/nom</text>
<text x="265" y="532">Nm</text>
<text x="306.5" y="532"><tspan class="d">301,5</tspan> / <tspan class="d">188,4</tspan> / <tspan class="d">245,0</tspan></text>
<text x="171.5" y="548">alpha max/min</text>
<text x="263.5" y="548">deg</text>
<text x="312.5" y="548"><tspan class="d">57,62</tspan> /   <tspan class="d">36,01</tspan></text>
<text x="434.5" y="485">FRICTION</text>
<text x="492.5" y="485">min</text>
<text x="525.5" y="485">max</text>
<text x="434.5" y="500">µG</text>
<text x="502.3" y="500" text-anchor="middle"><tspan class="d">0,120</tspan></text>
<text x="544.8" y="500" text-anchor="middle"><tspan class="d">0,120</tspan></text>
<text x="434.5" y="516">µK</text>
<text x="502.3" y="516" text-anchor="middle"><tspan class="d">0,100</tspan></text>
<text x="544.8" y="516" text-anchor="middle"><tspan class="d">0,100</tspan></text>
<text x="434.5" y="532">µTr</text>
<text x="502.3" y="532" text-anchor="middle"><tspan class="d">0,150</tspan></text>
<text x="434.5" y="548">K</text>
<text x="502.3" y="548" text-anchor="middle"><tspan class="d">0,158</tspan></text>
<text x="171.5" y="579.2">FACTORS OF SAFETY</text>
<text x="171.5" y="595.2">Safety against loosening</text>
<text x="397.5" y="595.2">FMzul/FMmax,req</text>
<text x="534.5" y="595.2" text-anchor="middle"><tspan class="d">1,48</tspan></text>
<text x="171.5" y="611.2">Safety yield point red.B</text>
<text x="397.5" y="611.2">SF=Rp/Sig.redB</text>
<text x="534.5" y="611.2" text-anchor="middle"><tspan class="d">1,17</tspan></text>
<text x="171.5" y="626.2">Safety ag.fatigue fract.(centr.)</text>
<text x="397.5" y="626.2">SD=Sig.AS/Sig.a</text>
<text x="534.5" y="626.2" text-anchor="middle"><tspan class="d">48,98</tspan></text>
<text x="171.5" y="642.2">Safety plate surface pressure</text>
<text x="397.5" y="642.2">Sp=pG/pBmax</text>
<text x="534.5" y="642.2" text-anchor="middle"><tspan class="d">3,41</tspan></text>
<text x="171.5" y="658.2">Safety against slipping due to FQ</text>
<text x="397.5" y="658.2">SG=FKRmin/FKQreq</text>
<text x="534.5" y="658.2" text-anchor="middle"><tspan class="d">1,54</tspan></text>
<text x="171.5" y="673.2">Safety against shearing</text>
<text x="397.5" y="673.2">SA=Atau*tauB/FQ</text>
<text x="534.5" y="673.2" text-anchor="middle"><tspan class="d">15,15</tspan></text>
<text x="171.5" y="689.2">Safety bolt bearing stress</text>
<text x="397.5" y="689.2">SL=h*d*Re/FQ</text>
<text x="534.5" y="689.2" text-anchor="middle"><tspan class="d">15,89</tspan></text>
<text x="171.5" y="754.5" style="font-size:11px;letter-spacing:0px">flange:  de= <tspan class="d">135</tspan>mm, dt= <tspan class="d">100</tspan>mm, ns=<tspan class="d">6</tspan></text>
<text x="171.5" y="770.4" style="font-size:11px;letter-spacing:0px">T= <tspan class="d">2000</tspan>Nm,  Mb= <tspan class="d">1200</tspan>Nm,  Fxo=<tspan class="d">1000</tspan>N,  Fxu=<tspan class="d">0</tspan>N</text>
<text x="1052.5" y="760.6">deformation cone</text>
<text x="1052.5" y="778.6">DA,Gr</text>
<text x="1108.5" y="778.6">mm</text>
<text x="1151" y="778.6"><tspan class="d">61,52</tspan></text>
<text x="1052.5" y="796.6">phi</text>
<text x="1109" y="796.6">°</text>
<text x="1147.6" y="796.6"><tspan class="d">26,8</tspan></text>
<text x="1052.5" y="814.6">w / betaL</text>
<text x="1142" y="814.6"><tspan class="d">1</tspan> / <tspan class="d">1,92</tspan></text>
<text x="407.5" y="842.7">i</text>
<text x="422.5" y="842.7">material</text>
<text x="567.5" y="842.7">E [MPa]</text>
<text x="624" y="842.7">pG</text>
<text x="664.5" y="842.7">pBmax</text>
<text x="713.5" y="842.7">dwo</text>
<text x="753.5" y="842.7">dwu</text>
<text x="793.5" y="842.7">d.[mm/N]</text>
<text x="415.5" y="861.3" text-anchor="end"><tspan class="d">1</tspan></text>
<text x="422.5" y="861.3"><tspan class="d">0.6025</tspan> GG <tspan class="d">25</tspan></text>
<text x="571" y="861.3"><tspan class="d">110000</tspan></text>
<text x="627.7" y="861.3"><tspan class="d">800</tspan></text>
<text x="667.2" y="861.3"><tspan class="d">235</tspan></text>
<text x="716" y="861.3"><tspan class="d">30,6</tspan></text>
<text x="756.5" y="861.3"><tspan class="d">60,9</tspan></text>
<text x="793.5" y="861.3"><tspan class="d">0,229</tspan>E-<tspan class="d">6</tspan></text>
<text x="415.5" y="878.8" text-anchor="end"><tspan class="d">2</tspan></text>
<text x="422.5" y="878.8"><tspan class="d">0.6025</tspan> GG <tspan class="d">25</tspan></text>
<text x="571" y="878.8"><tspan class="d">110000</tspan></text>
<text x="627.7" y="878.8"><tspan class="d">800</tspan></text>
<text x="667.2" y="878.8"><tspan class="d">208</tspan></text>
<text x="716" y="878.8"><tspan class="d">60,9</tspan></text>
<text x="756.5" y="878.8"><tspan class="d">31,9</tspan></text>
<text x="793.5" y="878.8"><tspan class="d">0,212</tspan>E-<tspan class="d">6</tspan></text></g>
</svg>
</body></html>
